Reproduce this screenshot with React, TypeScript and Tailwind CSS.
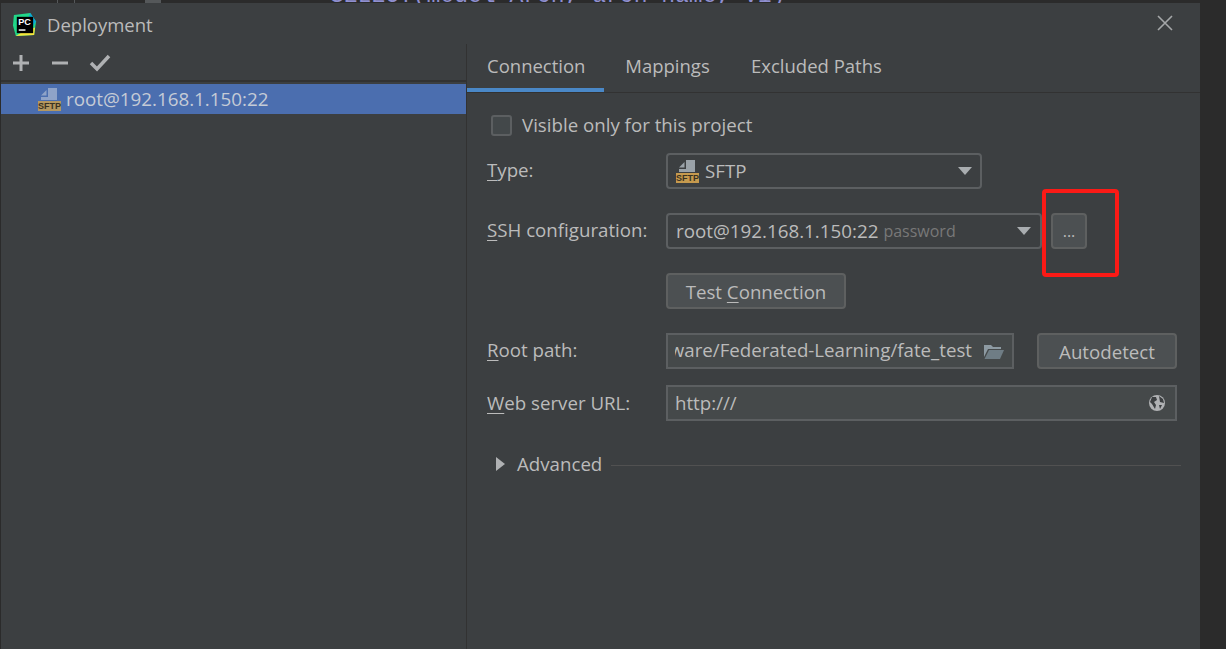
const font = "font-['Open_Sans','Noto_Sans',sans-serif]";

function SftpIcon({ dim }: { dim?: boolean }) {
  const doc = dim ? "#8fa3c8" : "#9aa2a8";
  return (
    <span className="relative block w-[24px] h-[24px] shrink-0">
      <svg width="24" height="24" viewBox="0 0 24 24" className="absolute left-0 top-0">
        <path d="M8.500 3 V8.500 H3 Z" fill={doc} />
        <path d="M10 1 H19 V13 H3 V10 H10 Z" fill={doc} />
      </svg>
      <span
        className={`absolute left-0 bottom-0 w-[23px] h-[10px] ${dim ? "bg-[#b4975f]" : "bg-[#c69a4e]"} text-[#3a3222] text-[9px] leading-[10px] text-center font-bold font-['Liberation_Sans',sans-serif]`}
      >
        SFTP
      </span>
    </span>
  );
}

function Caret() {
  return (
    <svg width="14" height="8" viewBox="0 0 14 8" className="shrink-0">
      <path d="M0 0 H14 L7 8 Z" fill="#a9adb0" />
    </svg>
  );
}

function Label({ m, rest }: { m: string; rest: string }) {
  return (
    <span className="w-[179px] shrink-0 text-[18.700px] text-[#bbbbbb]">
      <span className="underline underline-offset-[3px]">{m}</span>
      {rest}
    </span>
  );
}

function PcLogo() {
  return (
    <svg width="25" height="25" viewBox="0 0 26 26">
      <path d="M2 3 L19 1 L25 10 L23 24 L4 25 L1 14 Z" fill="#21d789" />
      <path d="M19 1 L25 10 L22 14 L17 6 Z" fill="#09a8d8" />
      <path d="M4 25 L23 24 L24 16 L12 20 Z" fill="#f5e63c" />
      <rect x="5" y="5" width="17" height="17" fill="#000" />
      <rect x="7" y="18" width="7" height="1.500" fill="#fff" />
      <text x="6.500" y="14" fontSize="9.500" fontWeight="700" fill="#fff" fontFamily="Liberation Sans, sans-serif">PC</text>
    </svg>
  );
}

export default function App() {
  return (
    <div className={`${font} relative w-[1226px] h-[649px] overflow-hidden bg-[#2b2b2b] flex flex-col`}>
      <div className="h-[3px] overflow-hidden shrink-0 flex">
        <span className="ml-[57px] w-[18px] h-[3px] border-x border-[#55585a]" />
        <span className="ml-[70px] w-[16px] h-[3px] bg-[#55585a]" />
        <div className="ml-[169px] -mt-[15px] h-[22px] leading-[22px] text-[23px] text-[#8f8fd0] whitespace-nowrap font-['Liberation_Mono',monospace]">
          SELECT(model_Arch, arch_name, v1)
        </div>
      </div>
      <div className="ml-px w-[1199px] flex-1 min-h-0 bg-[#3c3f41] flex flex-col">
        <div className="h-[41px] shrink-0 flex items-center pt-[2px] pl-[11px] pr-[27px]">
          <PcLogo />
          <span className="ml-[10px] text-[18.500px] text-[#bbbbbb]">Deployment</span>
          <svg width="16" height="16" viewBox="0 0 16 16" className="ml-auto -mt-[3px]">
            <path d="M1 1 L15 15 M15 1 L1 15" stroke="#a5a7a9" strokeWidth="1.600" />
          </svg>
        </div>
        <div className="flex flex-1 min-h-0">
          <div className="w-[465px] shrink-0 flex flex-col">
            <div className="h-[38px] shrink-0 flex items-center gap-[19px] pl-[10px] pt-[2px] border-b-2 border-[#323232]">
              <svg width="20" height="20" viewBox="0 0 20 20">
                <path d="M10 2 V18 M2 10 H18" stroke="#afb1b3" strokeWidth="3" />
              </svg>
              <svg width="20" height="20" viewBox="0 0 20 20">
                <path d="M2 10 H18" stroke="#afb1b3" strokeWidth="3" />
              </svg>
              <svg width="22" height="20" viewBox="0 0 22 20">
                <path d="M2 10 L8 16 L20 3" stroke="#afb1b3" strokeWidth="3.500" fill="none" />
              </svg>
            </div>
            <div className="mt-[2px] h-[30px] bg-[#4b6eaf] flex items-center pl-[37px] text-[18.800px] text-[#c5cbd6]">
              <SftpIcon dim />
              <span className="ml-[4px]">root@192.168.1.150:22</span>
            </div>
          </div>
          <div className="flex-1 min-w-0 border-l border-[#323232] flex flex-col">
            <div className="h-[49px] shrink-0 flex border-b border-[#323232] text-[18.500px] text-[#bbbbbb]">
              <div className="w-[137px] pl-[20px] h-[48px] flex items-center border-b-4 border-[#4a88c7]">Connection</div>
              <div className="w-[127px] h-[48px] flex items-center justify-center border-b-4 border-transparent">Mappings</div>
              <div className="px-[20px] h-[48px] flex items-center border-b-4 border-transparent">Excluded Paths</div>
            </div>
            <div className="pl-[20px] pr-[23px] flex flex-col">
              <div className="mt-[21px] h-[22px] flex items-center pl-[4px]">
                <span className="w-[21px] h-[21px] rounded-[3px] border-2 border-[#5c5f61] bg-[#43484a]" />
                <span className="ml-[10px] text-[18.700px] text-[#bbbbbb]">Visible only for this project</span>
              </div>
              <div className="mt-[17px] h-[36px] flex items-center">
                <span className="-mt-[2px] flex"><Label m="T" rest="ype:" /></span>
                <div className="w-[316px] h-[36px] rounded-[4px] border-2 border-[#5c5f61] flex items-center pl-[8px] pr-[8px] text-[18.700px] text-[#bbbbbb]">
                  <SftpIcon />
                  <span className="ml-[5px]">SFTP</span>
                  <span className="ml-auto"><Caret /></span>
                </div>
              </div>
              <div className="mt-[24px] h-[36px] flex items-center">
                <span className="-mt-[2px] flex"><Label m="S" rest="SH configuration:" /></span>
                <div className="w-[376px] h-[36px] rounded-[4px] border-2 border-[#5c5f61] flex items-center pl-[8px] pr-[9px] text-[18.800px] text-[#bbbbbb]">
                  <span>root@192.168.1.150:22</span>
                  <span className="ml-[5px] text-[16px] text-[#787878]">password</span>
                  <span className="ml-auto"><Caret /></span>
                </div>
                <div className="ml-[9px] w-[36px] h-[36px] rounded-[4px] border-2 border-[#5e6060] bg-[#4c5052] flex items-center justify-center text-[16px] text-[#bbbbbb]">
                  ...
                </div>
              </div>
              <div className="mt-[24px] ml-[179px] w-[180px] h-[36px] pt-[2px] rounded-[4px] border-2 border-[#5e6060] bg-[#4c5052] flex items-center justify-center text-[18.700px] text-[#bbbbbb]">
                <span>Test <span className="underline underline-offset-[3px]">C</span>onnection</span>
              </div>
              <div className="mt-[24px] h-[36px] flex items-center">
                <span className="-mt-[2px] flex"><Label m="R" rest="oot path:" /></span>
                <div className="w-[348px] h-[36px] pb-px border-2 border-[#5c5f61] bg-[#45494a] flex items-center pl-[7px] pr-[7px] text-[18.700px] text-[#bbbbbb] overflow-hidden">
                  <span className="whitespace-nowrap w-[297px] overflow-hidden flex justify-end">ware/Federated-Learning/fate_test</span>
                  <svg width="22" height="18" viewBox="0 0 22 18" className="ml-auto shrink-0">
                    <path d="M1 3 H8 L10 5 H18 V7 H5 L1 15 Z" fill="#8d9aa2" />
                    <path d="M6 8 H21 L17 17 H1.500 Z" fill="#6f7d85" />
                  </svg>
                </div>
                <div className="ml-[23px] w-[140px] h-[36px] pt-[2px] rounded-[4px] border-2 border-[#5e6060] bg-[#4c5052] flex items-center justify-center text-[18.700px] text-[#bbbbbb]">
                  Autodetect
                </div>
              </div>
              <div className="mt-[16px] h-[36px] flex items-center">
                <Label m="W" rest="eb server URL:" />
                <div className="w-[511px] h-[36px] border-2 border-[#5c5f61] bg-[#45494a] flex items-center pl-[7px] pr-[9px] text-[18.700px] text-[#bbbbbb]">
                  <span>http:///</span>
                  <svg width="18" height="18" viewBox="0 0 18 18" className="ml-auto">
                    <circle cx="9" cy="9" r="8" fill="#afb1b3" />
                    <path d="M4 3 L8 3 L9 6 L6 8 L8 11 L7 15 L4 10 L2 8 Z M11 2 L15 5 L16 9 L12 8 Z M11 11 L14 11 L12 15 Z" fill="#3c3f41" />
                  </svg>
                </div>
              </div>
              <div className="mt-[31px] -mr-[4px] h-[24px] flex items-center pl-[9px]">
                <svg width="9" height="14" viewBox="0 0 9 14">
                  <path d="M0 0 L9 7 L0 14 Z" fill="#afb1b3" />
                </svg>
                <span className="ml-[12px] text-[18.700px] text-[#bbbbbb]">Advanced</span>
                <span className="ml-[9px] mt-[2px] flex-1 h-px bg-[#515151]" />
              </div>
            </div>
          </div>
        </div>
      </div>
      <div className="absolute left-[1042px] top-[189px] w-[77px] h-[88px] border-[4px] border-[#fb1a16] rounded-[4px]" />
    </div>
  );
}
